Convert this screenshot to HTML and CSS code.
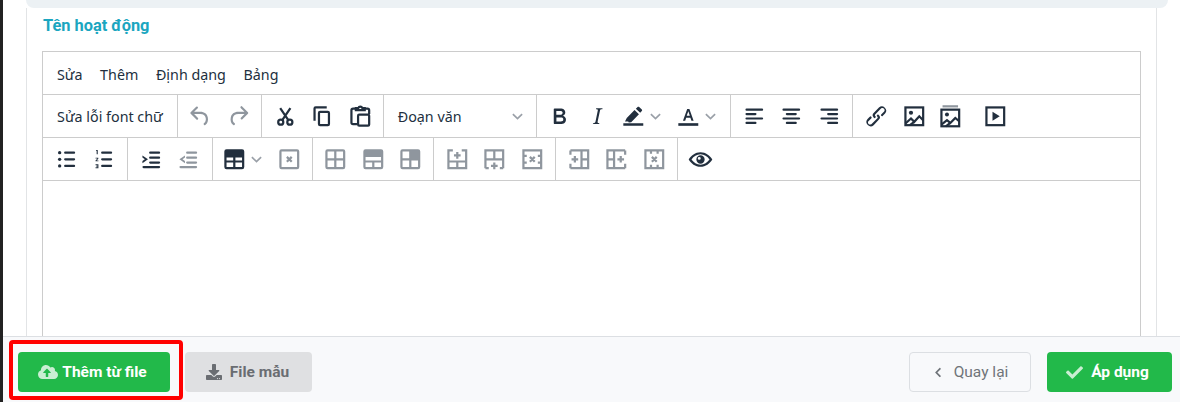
FILE: index.html
```html
<!DOCTYPE html>
<html>
<head>
    <meta charset="UTF-8">
    <meta name="viewport" content="width=device-width, initial-scale=1.0">
    <title>Tên hoạt động</title>
    <link rel="stylesheet" href="styles.css">
</head>
<body>
    <div class="top-band"></div>
    <div class="content">
        <div class="card">
            <div class="card-title">Tên hoạt động</div>
            <div class="editor">
                <div class="menubar">
                    <span class="menu-item">Sửa</span>
                    <span class="menu-item">Thêm</span>
                    <span class="menu-item">Định dạng</span>
                    <span class="menu-item">Bảng</span>
                </div>

                <!-- first toolbar row -->
                <div class="toolbar">
                    <div class="group">
                        <div class="btn btn-text">Sửa lỗi font chữ</div>
                    </div>
                    <div class="group">
                        <div class="btn off"><svg class="ico" viewBox="0 0 24 24"><path d="M6.4 8H12c3.7 0 6.2 2 6.8 5.1.6 2.7-.4 5.6-2.3 6.8a1 1 0 0 1-1-1.8c1.1-.6 1.8-2.7 1.4-4.6-.5-2.1-2.1-3.5-4.9-3.5H6.4l3.3 3.3a1 1 0 1 1-1.4 1.4l-5-5a1 1 0 0 1 0-1.4l5-5a1 1 0 0 1 1.4 1.4L6.4 8z"/></svg></div>
                        <div class="btn off"><svg class="ico" viewBox="0 0 24 24"><path d="M17.6 10H12c-2.8 0-4.4 1.4-4.9 3.5-.4 2 .3 4 1.4 4.6a1 1 0 1 1-1 1.8c-2-1.2-2.9-4.1-2.3-6.8.6-3 3-5.1 6.8-5.1h5.6l-3.3-3.3a1 1 0 1 1 1.4-1.4l5 5a1 1 0 0 1 0 1.4l-5 5a1 1 0 0 1-1.4-1.4l3.3-3.3z"/></svg></div>
                    </div>
                    <div class="group">
                        <div class="btn"><svg class="ico" viewBox="0 0 24 24"><g class="line"><circle cx="7.9" cy="17.3" r="2.3"/><circle cx="16.1" cy="17.3" r="2.3"/><path d="M9.4 15.2L16.6 4.6M14.6 15.2L7.4 4.6"/></g></svg></div>
                        <div class="btn"><svg class="ico" viewBox="0 0 24 24"><path d="M16 3H6a2 2 0 0 0-2 2v11h2V5h10V3zm1 4H10a2 2 0 0 0-2 2v10a2 2 0 0 0 2 2h7a2 2 0 0 0 2-2V9a2 2 0 0 0-2-2zm0 12h-7V9h7v10z"/></svg></div>
                        <div class="btn"><svg class="ico" viewBox="0 0 24 24"><g class="line"><path d="M8 5H5.5A1.5 1.5 0 0 0 4 6.500v11A1.500 1.500 0 0 0 5.500 19H9M16 5h2.500A1.500 1.500 0 0 1 20 6.500V10"/><path d="M8 6.500V4.500h2.200a1.900 1.900 0 0 1 3.600 0H16v2z"/><rect x="10" y="10.500" width="10" height="10" rx="1"/></g></svg></div>
                    </div>
                    <div class="group">
                        <div class="select">Đoạn văn<svg class="chev" viewBox="0 0 10 6"><path d="M.8.8L5 5 9.200.8"/></svg></div>
                    </div>
                    <div class="group">
                        <div class="btn"><svg class="ico" viewBox="0 0 24 24"><path d="M7.800 19c-.3 0-.5 0-.6-.2l-.2-.5V5.700c0-.2 0-.4.2-.5l.6-.2h5c1.500 0 2.700.3 3.500 1 .7.6 1.100 1.400 1.100 2.500a3 3 0 0 1-.6 1.900c-.4.6-1 1-1.600 1.200.4.100.9.3 1.300.6s.8.7 1 1.200c.4.4.5 1 .5 1.600 0 1.300-.4 2.300-1.300 3-.8.7-2.100 1-3.800 1H7.800zm5-8.300c.6 0 1.200-.1 1.600-.5.4-.3.6-.7.6-1.300 0-1.100-.8-1.700-2.300-1.700H9.300v3.500h3.500zm.5 6c.7 0 1.300-.1 1.700-.4.4-.4.6-.9.6-1.500s-.2-1-.7-1.400c-.4-.3-1-.4-2-.4H9.400v3.700h3.900z"/></svg></div>
                        <div class="btn"><svg class="ico" viewBox="0 0 24 24"><path d="M16.700 4.700l-.1.9h-.3c-.6 0-1 0-1.400.3-.3.3-.4.6-.5 1.100l-2.100 9.800v.6c0 .5.4.8 1.400.8h.2l-.2.8H8l.2-.8h.2c1.100 0 1.800-.5 2-1.500l2-9.800.1-.5c0-.6-.4-.8-1.400-.8h-.3l.2-.9h5.800z"/></svg></div>
                        <div class="split">
                            <svg class="ico" viewBox="0 0 24 24"><path d="M3 18.200h18v2.400H3zM4.500 16.800l1.600-3.300 7-7.200 4 3.800-7 7.200-2.200.3-.5-.8zM14.300 5.100l1.600-1.500c.4-.4 1-.4 1.400 0l2.400 2.300c.4.4.4 1 0 1.400l-1.500 1.500z"/></svg>
                            <svg class="chev" viewBox="0 0 10 6"><path d="M.8.8L5 5 9.200.8"/></svg>
                        </div>
                        <div class="split">
                            <svg class="ico" viewBox="0 0 24 24"><path d="M3 18.200h18v2.400H3z"/><path fill-rule="evenodd" d="M7.200 16L11 5.500h2L16.800 16h-2l-.9-2.800h-3.800L9.200 16h-2zm3.400-4.500h2.800L12 7.400l-1.400 4.100z"/></svg>
                            <svg class="chev" viewBox="0 0 10 6"><path d="M.8.8L5 5 9.200.8"/></svg>
                        </div>
                    </div>
                    <div class="group">
                        <div class="btn"><svg class="ico" viewBox="0 0 24 24"><path d="M5 5h14a1 1 0 0 1 0 2H5a1 1 0 1 1 0-2zm0 4h8a1 1 0 0 1 0 2H5a1 1 0 1 1 0-2zm0 8h8a1 1 0 0 1 0 2H5a1 1 0 0 1 0-2zm0-4h14a1 1 0 0 1 0 2H5a1 1 0 0 1 0-2z"/></svg></div>
                        <div class="btn"><svg class="ico" viewBox="0 0 24 24"><path d="M5 5h14a1 1 0 0 1 0 2H5a1 1 0 1 1 0-2zm3 4h8a1 1 0 0 1 0 2H8a1 1 0 1 1 0-2zm0 8h8a1 1 0 0 1 0 2H8a1 1 0 0 1 0-2zm-3-4h14a1 1 0 0 1 0 2H5a1 1 0 0 1 0-2z"/></svg></div>
                        <div class="btn"><svg class="ico" viewBox="0 0 24 24"><path d="M5 5h14a1 1 0 0 1 0 2H5a1 1 0 1 1 0-2zm6 4h8a1 1 0 0 1 0 2h-8a1 1 0 0 1 0-2zm0 8h8a1 1 0 0 1 0 2h-8a1 1 0 0 1 0-2zm-6-4h14a1 1 0 0 1 0 2H5a1 1 0 0 1 0-2z"/></svg></div>
                    </div>
                    <div class="group group-last group-media">
                        <div class="btn"><svg class="ico" viewBox="0 0 24 24"><path d="M6.200 12.300a1 1 0 0 1 1.400 1.400l-2 2a2 2 0 1 0 2.600 2.800l4.800-4.800a1 1 0 0 0 0-1.400 1 1 0 1 1 1.400-1.300 2.900 2.900 0 0 1 0 4L9.600 20a3.900 3.900 0 0 1-5.500-5.500l2-2zm11.600-.6a1 1 0 0 1-1.400-1.400l2-2a2 2 0 1 0-2.600-2.800L11 10.300a1 1 0 0 0 0 1.400A1 1 0 1 1 9.600 13a2.900 2.900 0 0 1 0-4L14.400 4a3.900 3.900 0 0 1 5.500 5.500l-2 2z"/></svg></div>
                        <div class="btn"><svg class="ico" viewBox="0 0 24 24"><g class="line"><rect x="4" y="4" width="16" height="16"/><path d="M4 18.500l5-4.500 3 3 4.500-5 3.500 3.500M8 20l4-3"/></g><circle cx="9" cy="8.800" r="1.900"/></svg></div>
                        <div class="btn btn-tight"><svg class="ico" viewBox="0 0 24 24"><path class="soft" d="M5 2h14v2H5z"/><g class="line"><rect x="4" y="6" width="16" height="15"/><path d="M4 19.500l5-4 3 2.500 4.500-4.500 3.500 3M8 21l4-3"/></g><circle cx="9" cy="10.300" r="1.800"/></svg></div>
                        <div class="btn btn-video"><svg class="ico" viewBox="0 0 24 24"><g class="line"><rect x="4" y="4" width="16" height="16"/></g><path d="M9.500 8l6.500 4-6.500 4z"/></svg></div>
                    </div>
                </div>

                <!-- second toolbar row -->
                <div class="toolbar">
                    <div class="group group-wide">
                        <div class="btn"><svg class="ico" viewBox="0 0 24 24"><path d="M11 5h8a1 1 0 0 1 0 2h-8a1 1 0 0 1 0-2zm0 6h8a1 1 0 0 1 0 2h-8a1 1 0 0 1 0-2zm0 6h8a1 1 0 0 1 0 2h-8a1 1 0 0 1 0-2z"/><circle cx="6" cy="6" r="1.500"/><circle cx="6" cy="12" r="1.500"/><circle cx="6" cy="18" r="1.500"/></svg></div>
                        <div class="btn"><svg class="ico" viewBox="0 0 24 24"><path d="M11 5h8a1 1 0 0 1 0 2h-8a1 1 0 0 1 0-2zm0 6h8a1 1 0 0 1 0 2h-8a1 1 0 0 1 0-2zm0 6h8a1 1 0 0 1 0 2h-8a1 1 0 0 1 0-2zM5.800 3.500h1.200v4H6V4.500h-.7zM5 10.500h2.500v.9L6 13h1.600v.8H5V13l1.500-1.500v-.3H5zM5 16.500h2.600v3.500H5v-.8h1.700v-.6H5.500v-.7h1.200v-.6H5z"/></svg></div>
                    </div>
                    <div class="group group-wide">
                        <div class="btn"><svg class="ico" viewBox="0 0 24 24"><path d="M11 5h8a1 1 0 0 1 0 2h-8a1 1 0 0 1 0-2zm0 4.500h8a1 1 0 0 1 0 2h-8a1 1 0 0 1 0-2zm0 4.500h8a1 1 0 0 1 0 2h-8a1 1 0 0 1 0-2zM5 18h14a1 1 0 0 1 0 2H5a1 1 0 0 1 0-2zM4 8.500l5 3.500-5 3.500v-1.900L6.200 12 4 10.400z"/></svg></div>
                        <div class="btn off"><svg class="ico" viewBox="0 0 24 24"><path d="M11 5h8a1 1 0 0 1 0 2h-8a1 1 0 0 1 0-2zm0 4.500h8a1 1 0 0 1 0 2h-8a1 1 0 0 1 0-2zm0 4.500h8a1 1 0 0 1 0 2h-8a1 1 0 0 1 0-2zM5 18h14a1 1 0 0 1 0 2H5a1 1 0 0 1 0-2zM9 8.500L4 12l5 3.500v-1.900L6.800 12 9 10.400z"/></svg></div>
                    </div>
                    <div class="group">
                        <div class="split split-table">
                            <svg class="ico" viewBox="0 0 24 24"><path fill-rule="evenodd" d="M5 3h14a2 2 0 0 1 2 2v14a2 2 0 0 1-2 2H5a2 2 0 0 1-2-2V5a2 2 0 0 1 2-2zm0 7.300V13h6v-2.700zm8 0V13h6v-2.700zM5 15v4h6v-4zm8 0v4h6v-4z"/></svg>
                            <svg class="chev" viewBox="0 0 10 6"><path d="M.8.8L5 5 9.200.8"/></svg>
                        </div>
                        <div class="btn off"><svg class="ico" viewBox="0 0 24 24"><g class="line"><rect x="4" y="4" width="16" height="16" rx="1"/><path d="M9.800 9.800l4.400 4.400M14.200 9.800l-4.400 4.400"/></g></svg></div>
                    </div>
                    <div class="group">
                        <div class="btn off"><svg class="ico" viewBox="0 0 24 24"><g class="line"><rect x="4" y="4" width="16" height="16" rx="1"/><path d="M4 12h16M12 4v16"/></g></svg></div>
                        <div class="btn off"><svg class="ico" viewBox="0 0 24 24"><g class="line"><rect x="4" y="4" width="16" height="16" rx="1"/><path d="M12 4v5M12 14v6"/></g><path d="M4 4h16v6H4zM4 13h16v2H4z"/></svg></div>
                        <div class="btn off"><svg class="ico" viewBox="0 0 24 24"><g class="line"><rect x="4" y="4" width="16" height="16" rx="1"/><path d="M4 12h16M12 4v16"/></g><path d="M12 4h8v8h-8z"/></svg></div>
                    </div>
                    <div class="group">
                        <div class="btn off"><svg class="ico" viewBox="0 0 24 24"><g class="line"><path d="M8 4H4v16h16V4h-4M4 14h16M12 14v6M9 8.500h6M12 5.500v6"/></g></svg></div>
                        <div class="btn off"><svg class="ico" viewBox="0 0 24 24"><g class="line"><path d="M4 20V4h16v16M4 12h16M12 4v8M9 18h6M12 15v6M4 20h3M17 20h3"/></g></svg></div>
                        <div class="btn off"><svg class="ico" viewBox="0 0 24 24"><g class="line"><path d="M4 4h16v16H4zM4 9h3M17 9h3M4 15h3M17 15h3M9.800 9.800l4.400 4.400M14.200 9.800l-4.400 4.400"/></g></svg></div>
                    </div>
                    <div class="group">
                        <div class="btn off"><svg class="ico" viewBox="0 0 24 24"><g class="line"><path d="M4 4h16v16H4M14 4v16M14 12h6M4 8V4M4 20v-4M5 12h6M8 9v6"/></g></svg></div>
                        <div class="btn off"><svg class="ico" viewBox="0 0 24 24"><g class="line"><path d="M20 4H4v16h16M10 4v16M4 12h6M20 8V4M20 20v-4M13 12h6M16 9v6"/></g></svg></div>
                        <div class="btn off"><svg class="ico" viewBox="0 0 24 24"><g class="line"><path d="M4 4h16v16H4zM9 4v3M15 4v3M9 17v3M15 17v3M9.800 9.800l4.400 4.400M14.200 9.800l-4.400 4.400"/></g></svg></div>
                    </div>
                    <div class="group group-last">
                        <div class="btn"><svg class="ico ico-eye" viewBox="0 0 24 24"><path fill-rule="evenodd" d="M12 5.500c4.600 0 8.400 2.900 10.500 6.500-2.100 3.600-5.900 6.500-10.500 6.500S3.600 15.600 1.500 12C3.600 8.400 7.400 5.500 12 5.500zm0 1.900c-3.300 0-6.100 1.900-8 4.600 1.900 2.700 4.700 4.600 8 4.600s6.100-1.900 8-4.600c-1.900-2.700-4.700-4.600-8-4.600zm0 .9a3.700 3.700 0 1 1 0 7.400 3.700 3.700 0 0 1 0-7.400zm-1.100 1.400a1.300 1.300 0 1 0 0 2.600 1.300 1.300 0 0 0 0-2.600z"/></svg></div>
                    </div>
                </div>
            </div>
        </div>
    </div>

    <div class="footer">
        <div class="action action-green action-upload">
            <svg class="fa fa-cloud" viewBox="0 0 640 512"><path d="M537.600 226.600c4.100-10.700 6.400-22.400 6.400-34.600 0-53-43-96-96-96-19.700 0-38.100 6-53.300 16.200C367 64.200 315.300 32 256 32c-88.400 0-160 71.600-160 160 0 2.700.1 5.400.2 8.100C40.200 219.800 0 273.200 0 336c0 79.500 64.500 144 144 144h368c70.700 0 128-57.300 128-128 0-61.900-44-113.600-102.400-125.400zM393.400 288H328v112c0 8.800-7.200 16-16 16h-48c-8.800 0-16-7.200-16-16V288h-65.400c-14.300 0-21.400-17.200-11.300-27.300l105.400-105.400c6.200-6.200 16.400-6.200 22.600 0l105.400 105.400c10.100 10.100 3 27.300-11.300 27.300z"/></svg>
            Thêm từ file
            <div class="highlight"></div>
        </div>
        <div class="action action-grey">
            <svg class="fa" viewBox="0 0 512 512"><path d="M216 0h80c13.300 0 24 10.700 24 24v168h87.700c17.800 0 26.700 21.500 14.100 34.100L269.700 378.300c-7.500 7.500-19.800 7.500-27.300 0L90.100 226.100c-12.600-12.600-3.700-34.100 14.100-34.100H192V24c0-13.300 10.700-24 24-24zm296 376v112c0 13.300-10.700 24-24 24H24c-13.300 0-24-10.700-24-24V376c0-13.300 10.700-24 24-24h146.700l49 49c20.100 20.100 52.500 20.100 72.600 0l49-49H488c13.300 0 24 10.700 24 24zm-124 88c0-11-9-20-20-20s-20 9-20 20 9 20 20 20 20-9 20-20zm64 0c0-11-9-20-20-20s-20 9-20 20 9 20 20 20 20-9 20-20z"/></svg>
            File mẫu
        </div>
        <div class="spacer"></div>
        <div class="action action-back">
            <svg class="fa fa-back" viewBox="0 0 320 512"><path d="M34.520 239.030L228.870 44.690c9.370-9.370 24.570-9.370 33.940 0l22.670 22.670c9.360 9.360 9.370 24.520.04 33.900L131.490 256l154.020 154.750c9.340 9.380 9.320 24.540-.04 33.900l-22.670 22.670c-9.370 9.370-24.570 9.370-33.940 0L34.520 272.970c-9.370-9.370-9.370-24.570 0-33.940z"/></svg>
            Quay lại
        </div>
        <div class="action action-green action-apply">
            <svg class="fa fa-check" viewBox="0 0 512 512"><path d="M173.898 439.404l-166.400-166.400c-9.997-9.997-9.997-26.206 0-36.204l36.203-36.204c9.997-9.998 26.207-9.998 36.204 0L192 312.690 432.095 72.596c9.997-9.997 26.207-9.997 36.204 0l36.203 36.204c9.997 9.997 9.997 26.206 0 36.204l-294.400 294.401c-9.998 9.997-26.207 9.997-36.204-.001z"/></svg>
            Áp dụng
        </div>
    </div>
</body>
</html>
```

FILE: styles.css
```css
html, body {
    margin: 0;
    padding: 0;
    height: 100%;
}

body {
    box-sizing: border-box;
    height: 402px;
    overflow: hidden;
    display: flex;
    flex-direction: column;
    background: #fff;
    border-left: 3px solid #222;
    font-family: "Noto Sans", sans-serif;
    color: #222f3e;
}

.top-band {
    flex: none;
    height: 8px;
    margin: 0 12px 0 23px;
    background: #ecf1f4;
    border-radius: 0 0 10px 10px;
}

.content {
    flex: 1;
    min-height: 0;
    overflow: hidden;
}

.card {
    box-sizing: border-box;
    width: 1131px;
    height: 500px;
    margin-left: 23px;
    padding: 0 15px;
    background: #fff;
    border: 1px solid #e2e4e6;
    border-top: none;
}

.card-title {
    height: 43px;
    padding-left: 1px;
    line-height: 36px;
    font-family: Roboto, sans-serif;
    font-size: 16.4px;
    font-weight: 700;
    color: #1ba6c0;
}

.editor {
    box-sizing: border-box;
    height: 420px;
    border: 1px solid #ccc;
}

.menubar {
    display: flex;
    align-items: center;
    box-sizing: border-box;
    height: 43px;
    padding: 2px 0 0 14px;
    gap: 17.6px;
    border-bottom: 1px solid #ccc;
    font-size: 14.3px;
}

.toolbar {
    display: flex;
    height: 42px;
    border-bottom: 1px solid #ccc;
}

/* toolbar groups and buttons */
.group {
    display: flex;
    align-items: center;
    padding: 0 4.1px;
    border-right: 1px solid #ccc;
}

.group-wide {
    padding: 0 4.5px;
}

.group-last {
    border-right: none;
}

.group-media {
    padding-left: 5px;
}

.btn {
    display: flex;
    align-items: center;
    justify-content: center;
    width: 33.5px;
    height: 38px;
    margin: 0 2px;
    color: #222f3e;
}

.btn.off {
    color: #8f969e;
}

.btn-text {
    width: auto;
    padding: 0 8px;
    font-size: 14.3px;
    white-space: nowrap;
}

.btn-tight {
    margin-left: .5px;
}

.btn-video {
    margin-left: 9.5px;
}

.select {
    display: flex;
    align-items: center;
    justify-content: space-between;
    box-sizing: border-box;
    width: 140px;
    height: 38px;
    margin: 0 2px;
    padding: 0 7px 0 8px;
    font-size: 14.3px;
}

.split {
    display: flex;
    align-items: center;
    width: 51px;
    height: 38px;
    margin: 0 2px;
}

.split .ico {
    margin-left: 2px;
}

.split-table {
    width: 49px;
}

.ico {
    flex: none;
    width: 26.6px;
    height: 26.6px;
    fill: currentColor;
}

.ico .line {
    fill: none;
    stroke: currentColor;
    stroke-width: 2;
}

.ico .soft {
    fill: #8f969e;
}

.ico-eye {
    width: 27px;
    height: 27px;
}

.chev {
    flex: none;
    width: 11px;
    height: 7px;
    margin-left: 3px;
    fill: none;
    stroke: #9aa0a8;
    stroke-width: 1.5;
}

/* footer */
.footer {
    flex: none;
    display: flex;
    align-items: flex-start;
    gap: 15px;
    box-sizing: border-box;
    height: 66px;
    padding: 15px 8px 0 15px;
    background: #f8f9fb;
    border-top: 1px solid #dcdfe3;
    font-family: Roboto, sans-serif;
}

.spacer {
    flex: 1;
}

.action {
    position: relative;
    display: flex;
    align-items: center;
    justify-content: center;
    box-sizing: border-box;
    height: 40px;
    border-radius: 4px;
    font-size: 15.5px;
    font-weight: 700;
    white-space: nowrap;
}

.action-green {
    background: #22b94a;
    color: #fff;
}

.action-grey {
    width: 127px;
    padding-right: 2px;
    background: #dfe0e2;
    color: #6a6d72;
}

.action-back {
    width: 122px;
    margin-right: 1px;
    padding-left: 2px;
    border: 1px solid #dcdfe3;
    font-weight: 400;
    color: #6f7479;
}

.action-upload {
    width: 152px;
    padding-right: 3px;
}

.action-apply {
    width: 125px;
    padding-right: 4px;
}

.fa {
    width: 16px;
    height: 16px;
    margin-right: 8px;
    fill: currentColor;
}

.fa-cloud {
    width: 20px;
    height: 16px;
    margin-right: 4px;
    fill: #c9eed2;
}

.fa-check {
    width: 17px;
    height: 17px;
    fill: #c9eed2;
}

.fa-back {
    width: 8px;
    height: 11px;
    margin-right: 12px;
}

.highlight {
    position: absolute;
    top: -12px;
    left: -9px;
    right: -13px;
    bottom: -8px;
    border: 4px solid #f00;
    border-radius: 4px;
    pointer-events: none;
}
```
